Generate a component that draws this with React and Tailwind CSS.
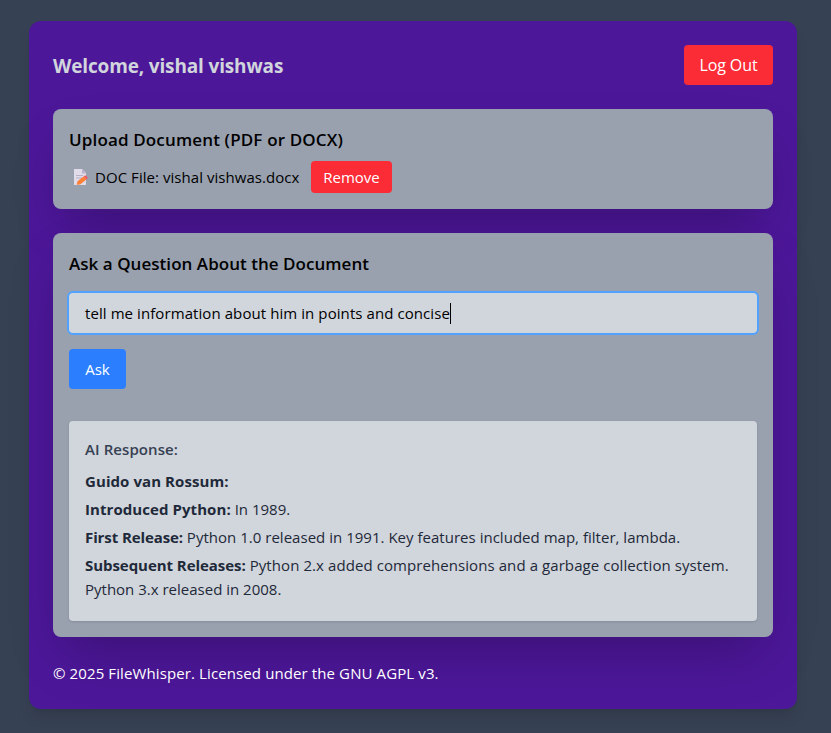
function MemoIcon() {
  return (
    <svg className="h-[17px] w-[15px] shrink-0" viewBox="0 0 15 17" aria-hidden="true">
      <path d="M1 0h8l4 4v12H1z" fill="#e0dcea" />
      <path d="M9 0l4 4.5H9z" fill="#bcb2cc" />
      <path d="M3 6.500h7M3 9h6" stroke="#b3aac2" strokeWidth="0.9" />
      <path d="M3.600 15.800l.9-3.600 6.300-4.900 2.600 3.200-6.300 4.900z" fill="#ff8036" />
      <path d="M10.800 7.300l1.200-.8c1-.5 3.200 2.100 2.400 2.900l-1 1.100z" fill="#f4545f" />
    </svg>
  );
}

const points = [
  { title: "Guido van Rossum:", titleClass: "tracking-[0.08px]", lines: [] },
  {
    title: "Introduced Python:",
    titleClass: "tracking-[0.07px]",
    lines: [{ text: "In 1989.", className: "" }],
  },
  {
    title: "First Release:",
    titleClass: "tracking-[-0.1px]",
    lines: [
      {
        text: "Python 1.0 released in 1991. Key features included map, filter, lambda.",
        className: "tracking-[0.02px]",
      },
    ],
  },
  {
    title: "Subsequent Releases:",
    titleClass: "tracking-[-0.05px]",
    lines: [
      {
        text: "Python 2.x added comprehensions and a garbage collection system.",
        className: "tracking-[0.08px]",
      },
      { text: "Python 3.x released in 2008.", className: "block" },
    ],
  },
];

export default function App() {
  return (
    <div className="min-h-[733px] bg-gray-700 pt-[21px] pl-[29px] font-['Open_Sans',sans-serif] text-[15px] leading-6">
      <main className="w-3xl rounded-xl bg-violet-900 p-6 shadow-lg">
        <header className="mb-6 flex h-10 items-center justify-between">
          <h1 className="pt-0.5 text-[19px] font-bold tracking-[-0.15px] text-gray-300">Welcome, vishal vishwas</h1>
          <button className="h-10 w-[89px] rounded bg-red-500 text-base tracking-[-0.1px] text-white">Log Out</button>
        </header>

        <section className="mb-6 rounded-lg bg-gray-400 p-4 shadow-2xl">
          <h2 className="mb-[7px] pt-px text-[17px] leading-7 font-semibold tracking-[0.15px]">
            Upload Document (PDF or DOCX)
          </h2>
          <div className="flex h-8 items-center pl-1">
            <MemoIcon />
            <span className="ml-[7px] w-[216px] whitespace-nowrap tracking-[0.05px]">DOC File: vishal vishwas.docx</span>
            <button className="h-8 w-[81px] rounded bg-red-500 text-white">Remove</button>
          </div>
        </section>

        <section className="mb-6 rounded-lg bg-gray-400 p-4 shadow-2xl">
          <h2 className="mb-[15px] pt-px text-[17px] leading-7 font-semibold tracking-[0.04px]">
            Ask a Question About the Document
          </h2>
          <div className="flex h-10 items-center rounded bg-gray-300 px-4 ring-2 ring-blue-400">
            <span className="whitespace-nowrap tracking-[0.08px]">tell me information about him in points and concise</span>
            <span className="h-[21px] w-px bg-black" />
          </div>
          <button className="mt-4 block h-10 w-[57px] rounded bg-blue-500 text-white">Ask</button>
          <div className="mt-8 rounded bg-gray-300 p-4 text-gray-800 shadow">
            <h3 className="mb-2 font-semibold tracking-[0.08px] text-gray-700">AI Response:</h3>
            {points.map((p) => (
              <p key={p.title} className="mb-1">
                <strong className={p.titleClass}>{p.title}</strong>{" "}
                {p.lines.map((line) => (
                  <span key={line.text} className={line.className}>
                    {line.text}
                  </span>
                ))}
              </p>
            ))}
          </div>
        </section>

        <footer className="tracking-[0.11px] text-white">© 2025 FileWhisper. Licensed under the GNU AGPL v3.</footer>
      </main>
    </div>
  );
}
